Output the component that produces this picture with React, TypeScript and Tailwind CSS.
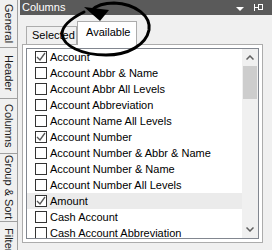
import React from "react";

const sideTabs = [
  { label: "General", h: "h-[48px]" },
  { label: "Header", h: "h-[51px]" },
  { label: "Columns", h: "h-[55px]" },
  { label: "Group & Sort", h: "h-[68px]" },
];

const fields = [
  { label: "Account", checked: true },
  { label: "Account Abbr & Name", checked: false },
  { label: "Account Abbr All Levels", checked: false },
  { label: "Account Abbreviation", checked: false },
  { label: "Account Name All Levels", checked: false },
  { label: "Account Number", checked: true },
  { label: "Account Number & Abbr & Name", checked: false },
  { label: "Account Number & Name", checked: false },
  { label: "Account Number All Levels", checked: false },
  { label: "Amount", checked: true, hover: true },
  { label: "Cash Account", checked: false },
  { label: "Cash Account Abbreviation", checked: false },
];

function Check({ on }: { on: boolean }) {
  return (
    <span className="flex h-[12px] w-[12px] shrink-0 items-center justify-center border border-[#333333] bg-white">
      {on && (
        <svg width="10" height="10" viewBox="0 0 10 10">
          <polyline points="1,5 4,8 9,1" fill="none" stroke="#555555" strokeWidth="1.3" />
        </svg>
      )}
    </span>
  );
}

export default function App() {
  return (
    <div className="relative flex h-[250px] w-[272px] overflow-hidden bg-[#f0f0f0] font-['Liberation_Sans',Arial,sans-serif] text-[11px] text-black">
      {/* side tabs */}
      <div className="flex w-[18px] shrink-0 flex-col border-r border-[#a0a0a0]">
        {sideTabs.map((t) => (
          <div
            key={t.label}
            className={`${t.h} flex shrink-0 items-center justify-center border-b border-[#a0a0a0] text-[#1a1a1a]`}
          >
            <span className="whitespace-nowrap [writing-mode:vertical-rl]">{t.label}</span>
          </div>
        ))}
        <div className="flex flex-1 justify-center overflow-hidden pt-[6px] text-[#1a1a1a]">
          <span className="whitespace-nowrap [writing-mode:vertical-rl]">Filter</span>
        </div>
      </div>

      {/* panel */}
      <div className="ml-[2px] flex flex-1 flex-col">
        <div className="flex h-[15px] shrink-0 items-center bg-[#5a5a5a] pl-[2px] text-white">
          <span className="flex-1">Columns</span>
          <svg width="8" height="5" viewBox="0 0 8 5" className="mr-[10px] mt-[3px]">
            <polygon points="0,0 8,0 4,4" fill="#ffffff" />
          </svg>
          <svg width="9" height="9" viewBox="0 0 9 9" className="mr-[9px]">
            <line x1="0.5" y1="1" x2="0.5" y2="8" stroke="#ffffff" strokeWidth="1" />
            <line x1="0" y1="4.5" x2="4" y2="4.5" stroke="#ffffff" strokeWidth="1" />
            <rect x="4.5" y="1.5" width="4" height="5" fill="none" stroke="#ffffff" strokeWidth="1" />
          </svg>
        </div>

        {/* tab strip */}
        <div className="flex h-[29px] shrink-0 items-end pl-[6px]">
          <div className="flex h-[18px] w-[51px] items-center border border-b-0 border-[#acacac] bg-[#f0f0f0] pl-[5px]">
            Selected
          </div>
          <div className="relative z-10 -mb-px flex h-[24px] w-[60px] items-center border border-b-0 border-[#acacac] bg-white pb-[2px] pl-[8px]">
            Available
          </div>
        </div>

        {/* tab page */}
        <div className="ml-[2px] flex h-[199px] w-[241px] border border-[#acacac] bg-white p-[3px]">
          <div className="flex flex-1 border border-[#828790] bg-white">
            <div className="flex flex-1 flex-col overflow-hidden">
              {fields.map((f) => (
                <div
                  key={f.label}
                  className={`flex h-[16px] shrink-0 items-center gap-[3px] whitespace-nowrap pl-[8px] ${f.hover ? "bg-[#ebebeb]" : ""}`}
                >
                  <Check on={f.checked} />
                  <span>{f.label}</span>
                </div>
              ))}
            </div>
            <div className="flex w-[16px] shrink-0 flex-col bg-[#f0f0f0]">
              <div className="flex h-[17px] items-center justify-center">
                <svg width="8" height="5" viewBox="0 0 8 5">
                  <polyline points="0.5,4.5 4,1 7.5,4.5" fill="none" stroke="#606060" strokeWidth="1.5" />
                </svg>
              </div>
              <div className="mx-[1px] h-[33px] bg-[#cdcdcd]" />
              <div className="flex-1" />
              <div className="flex h-[17px] items-center justify-center">
                <svg width="8" height="5" viewBox="0 0 8 5">
                  <polyline points="0.5,0.5 4,4 7.5,0.5" fill="none" stroke="#606060" strokeWidth="1.5" />
                </svg>
              </div>
            </div>
          </div>
        </div>
      </div>

      {/* hand-drawn annotation */}
      <svg width="272" height="250" viewBox="0 0 272 250" className="pointer-events-none absolute left-0 top-0 z-20">
        <path
          d="M84 12 C 72 18, 62 26, 62 34 C 63 46, 82 55, 106 55 C 128 55, 146 45, 149 30 C 151 16, 136 4, 114 3 C 104 3, 96 6, 92 10"
          fill="none"
          stroke="#000000"
          strokeWidth="3"
          strokeLinecap="round"
        />
        <polygon points="84,7 109,10 100,21" fill="#000000" />
      </svg>
    </div>
  );
}
